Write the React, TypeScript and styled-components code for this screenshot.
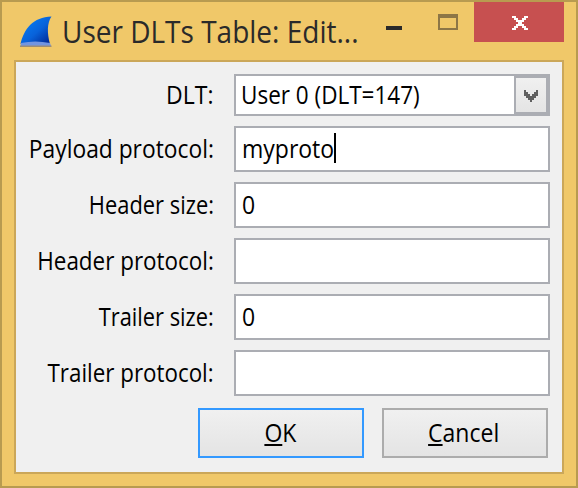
import React from "react";
import styled, { createGlobalStyle } from "styled-components";

const GlobalStyle = createGlobalStyle`
  *, *::before, *::after { box-sizing: border-box; }
  body { margin: 0; }
`;

const Window = styled.div`
  width: 578px;
  height: 488px;
  display: flex;
  flex-direction: column;
  padding: 0 12px 12px;
  background: #f0c869;
  border: 2px solid #b89b50;
  font-family: "Open Sans", "Noto Sans", sans-serif;
  font-size: 25px;
  color: #000;
  overflow: hidden;
`;

const TitleBar = styled.header`
  height: 58px;
  flex: none;
  display: flex;
  align-items: flex-start;
`;

const Logo = styled.svg`
  width: 32px;
  height: 32px;
  margin: 13px 0 0 6px;
  flex: none;
`;

const Title = styled.h1`
  width: 320px;
  margin: 9px 0 0 10px;
  font-size: 30.5px;
  font-weight: 400;
  line-height: 40px;
  color: #2a2a2a;
  white-space: nowrap;
`;

const Squeeze = styled.span<{ $x: number; $from?: string }>`
  display: inline-block;
  white-space: pre;
  transform: scaleX(${(p) => p.$x});
  transform-origin: ${(p) => p.$from ?? "left"} center;
`;

const WindowControls = styled.div`
  display: flex;
  align-items: flex-start;
  margin-left: auto;
`;

const MinimizeButton = styled.div`
  width: 16px;
  height: 4px;
  margin: 24px 36px 0 0;
  background: #2a2a2a;
`;

const MaximizeButton = styled.div`
  width: 20px;
  height: 16px;
  margin: 12px 16px 0 0;
  border: 2px solid #8d7646;
  border-top-width: 4px;
`;

const CloseButton = styled.div`
  width: 90px;
  height: 40px;
  padding: 14px 0 0 38px;
  background: #c75050;
  line-height: 0;
`;

const Client = styled.main`
  flex: 1;
  display: flex;
  flex-direction: column;
  padding: 12px 12px 0;
  background: #f0f0f0;
  border: 2px solid #cba759;
`;

const Form = styled.div`
  display: grid;
  grid-template-columns: 186px 316px;
  grid-template-rows: 42px repeat(5, 46px);
  column-gap: 20px;
  row-gap: 10px;
`;

const Label = styled.label`
  display: flex;
  align-items: center;
  justify-content: flex-end;
  padding-bottom: 2px;
  line-height: 34px;
`;

const Field = styled.div`
  display: flex;
  align-items: center;
  padding: 0 0 2px 6px;
  background: #fff;
  border: 2px solid #abadb3;
  line-height: 34px;
`;

const Typed = styled.span`
  width: 92px;
  display: flex;
`;

const Caret = styled.span`
  width: 2px;
  height: 30px;
  background: #000;
`;

const Combo = styled(Field)`
  padding: 0 0 0 5px;
  align-items: stretch;
`;

const ComboValue = styled.span`
  flex: 1;
  display: flex;
  align-items: center;
  padding-bottom: 2px;
`;

const DropButton = styled.span`
  width: 34px;
  display: flex;
  align-items: flex-start;
  justify-content: center;
  padding-top: 12px;
  border: 2px solid #abadb3;
  background: linear-gradient(#f0f0f0, #e4e4e4);
`;

const Actions = styled.div`
  display: flex;
  justify-content: flex-end;
  gap: 18px;
  padding: 12px 2px 0 0;
`;

const Button = styled.div<{ $primary?: boolean }>`
  width: 166px;
  height: 50px;
  display: flex;
  align-items: center;
  justify-content: center;
  padding: 0 2px 2px 0;
  border: 2px solid ${(p) => (p.$primary ? "#3399ff" : "#acacac")};
  background: linear-gradient(#f0f0f0, #e4e4e4);
  line-height: 34px;
`;

const Mnemonic = styled.span`
  text-decoration: underline;
  text-decoration-thickness: 2px;
  text-underline-offset: 2px;
  text-decoration-skip-ink: none;
`;

const rows = [
  { label: "Payload protocol:", value: "myproto", focused: true, x: 0.912 },
  { label: "Header size:", value: "0", x: 0.875 },
  { label: "Header protocol:", value: "", x: 0.897 },
  { label: "Trailer size:", value: "0", x: 0.873 },
  { label: "Trailer protocol:", value: "", x: 0.895 },
];

const FinLogo = () => (
  <Logo viewBox="0 0 32 32">
    <defs>
      <linearGradient id="fin" x1="0.2" y1="0.2" x2="0.9" y2="0.9">
        <stop offset="0" stopColor="#0878ee" />
        <stop offset="0.5" stopColor="#0862da" />
        <stop offset="1" stopColor="#022e9c" />
      </linearGradient>
    </defs>
    <path d="M0.5 29C4 14 13 2 31.5 1.5C27 8 27 18 30 29Z" fill="url(#fin)" />
    <path d="M1 28Q15 25 30 28L31 31H0.5Z" fill="#7295e0" />
    <path d="M0 30.5H31.5V32H0Z" fill="#9a8d78" />
  </Logo>
);

export default function App() {
  return (
    <>
      <GlobalStyle />
      <Window>
        <TitleBar>
          <FinLogo />
          <Title>
            <Squeeze $x={0.918}>User DLTs Table: Edit...</Squeeze>
          </Title>
          <WindowControls>
            <MinimizeButton />
            <MaximizeButton />
            <CloseButton>
              <svg width="16" height="14" viewBox="0 0 16 14" shapeRendering="crispEdges">
                <path
                  d="M0 0H4V2H6V4H10V2H12V0H16V2H14V4H12V6H10V8H12V10H14V12H16V14H12V12H10V10H6V12H4V14H0V12H2V10H4V8H6V6H4V4H2V2H0Z"
                  fill="#fff"
                />
              </svg>
            </CloseButton>
          </WindowControls>
        </TitleBar>
        <Client>
          <Form>
            <Label>
              <Squeeze $x={0.92} $from="right">DLT:</Squeeze>
            </Label>
            <Combo>
              <ComboValue>
                <Squeeze $x={0.9}>User 0 (DLT=147)</Squeeze>
              </ComboValue>
              <DropButton>
                <svg width="14" height="12" viewBox="0 0 14 12" shapeRendering="crispEdges">
                  <path
                    d="M0 0H2V2H4V4H6V6H8V4H10V2H12V0H14V6H12V8H10V10H8V12H6V10H4V8H2V6H0Z"
                    fill="#606060"
                  />
                </svg>
              </DropButton>
            </Combo>
            {rows.map((row) => (
              <React.Fragment key={row.label}>
                <Label>
                  <Squeeze $x={row.x} $from="right">{row.label}</Squeeze>
                </Label>
                <Field>
                  {row.focused ? (
                    <>
                      <Typed>
                        <Squeeze $x={0.92}>{row.value}</Squeeze>
                      </Typed>
                      <Caret />
                    </>
                  ) : (
                    <Squeeze $x={0.92}>{row.value}</Squeeze>
                  )}
                </Field>
              </React.Fragment>
            ))}
          </Form>
          <Actions>
            <Button $primary>
              <Squeeze $x={0.92} $from="center"><Mnemonic>O</Mnemonic>K</Squeeze>
            </Button>
            <Button>
              <Squeeze $x={0.92} $from="center"><Mnemonic>C</Mnemonic>ancel</Squeeze>
            </Button>
          </Actions>
        </Client>
      </Window>
    </>
  );
}
